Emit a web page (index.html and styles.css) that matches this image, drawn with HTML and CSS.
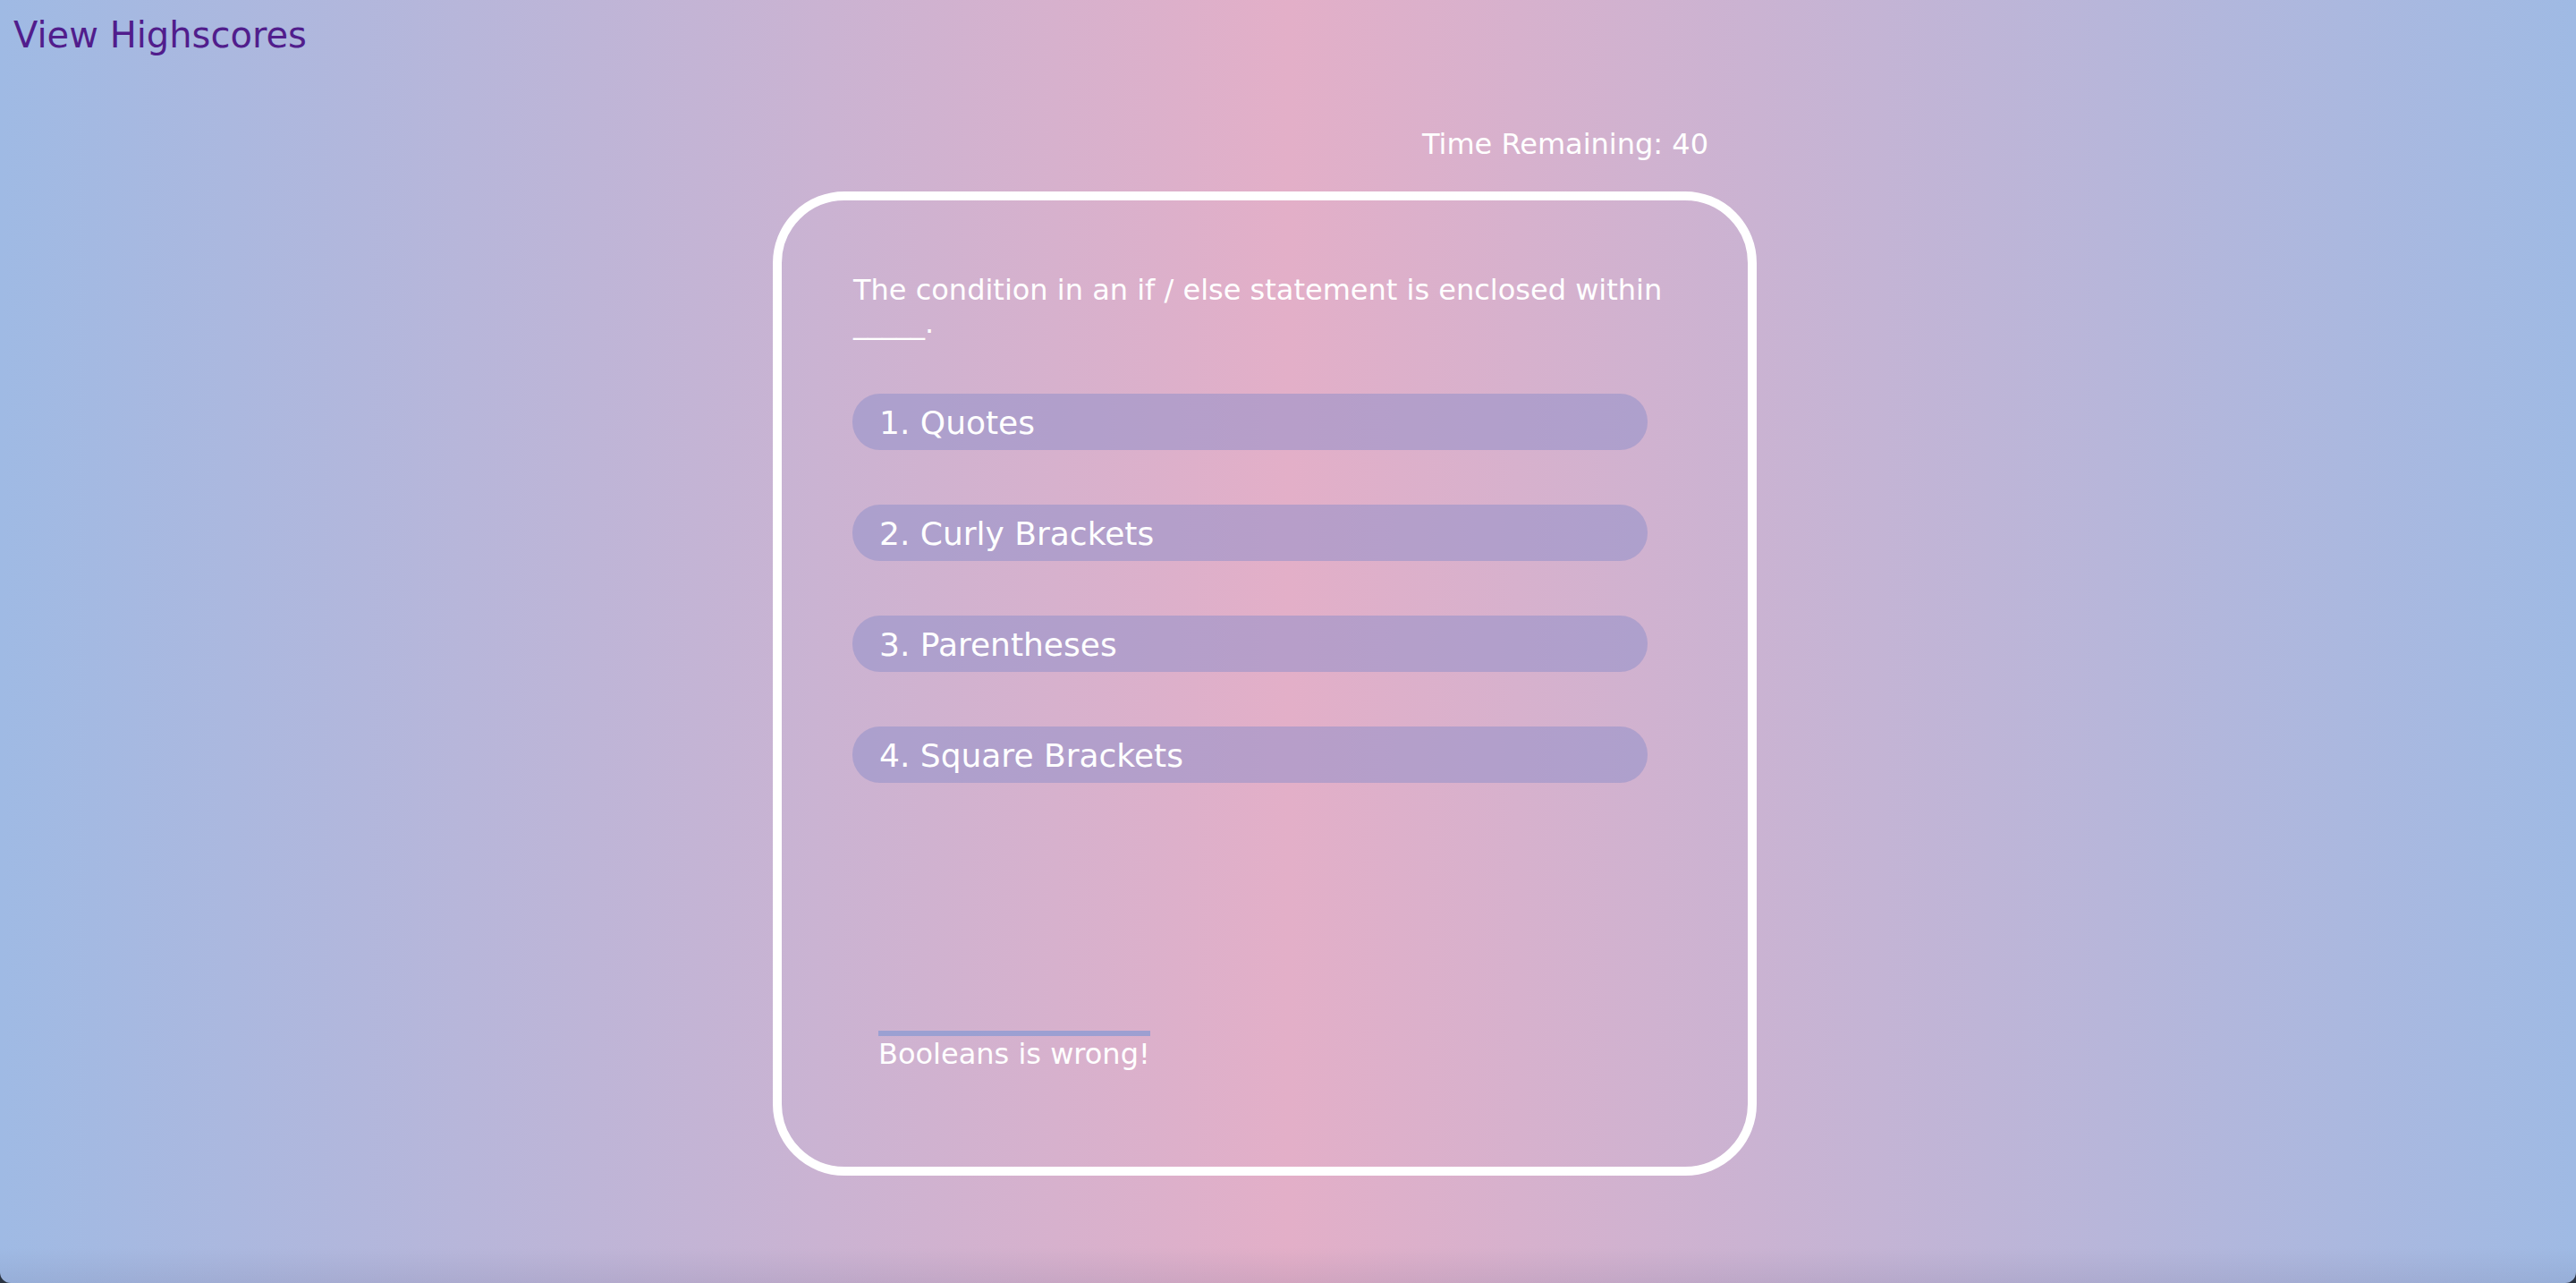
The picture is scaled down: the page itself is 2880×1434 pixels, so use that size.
FILE: index.html
```html
<!DOCTYPE html>
<html lang="en">
<head>
<meta charset="utf-8">
<title>Code Quiz</title>
<link rel="stylesheet" href="styles.css">
</head>
<body>
<div class="page">
  <header class="topbar">
    <a class="highscores" href="#">View Highscores</a>
  </header>
  <main class="stage">
    <div class="timer">Time Remaining: 40</div>
    <section class="card">
      <p class="question">The condition in an if / else statement is enclosed within _____.</p>
      <div class="answers">
        <button class="answer">1. Quotes</button>
        <button class="answer">2. Curly Brackets</button>
        <button class="answer">3. Parentheses</button>
        <button class="answer">4. Square Brackets</button>
      </div>
      <div class="feedback">
        <span class="feedback-text">Booleans is wrong!</span>
      </div>
    </section>
  </main>
</div>
</body>
</html>
```
FILE: styles.css
```css
* {
  box-sizing: border-box;
}

html {
  background: #2b3442;
}

body {
  margin: 0;
  font-family: "DejaVu Sans", Verdana, sans-serif;
}

.page {
  min-height: 1434px;
  border-radius: 0 0 12px 12px;
  overflow: hidden;
  background-image:
    linear-gradient(to top, rgba(90, 90, 130, 0.12), rgba(90, 90, 130, 0) 40px),
    linear-gradient(to right, #9fbae4 0%, #e3afc8 50%, #9fbae4 100%);
}

.topbar {
  padding: 16px 0 0 15px;
}

.highscores {
  display: inline-block;
  font-size: 40px;
  line-height: 47px;
  color: #511d8c;
  text-decoration: none;
}

.stage {
  margin-left: 30%;
  width: 1100px;
  padding-top: 80px;
}

.timer {
  font-size: 32px;
  line-height: 37px;
  color: #ffffff;
  text-align: right;
  padding-right: 54px;
}

.card {
  margin-top: 34px;
  height: 1100px;
  border: 10px solid #ffffff;
  border-radius: 80px;
  padding: 82px 80px 0 80px;
}

.question {
  margin: 0;
  font-size: 32px;
  line-height: 37px;
  color: #ffffff;
}

.answers {
  margin-top: 60px;
  display: flex;
  flex-direction: column;
  gap: 61px;
}

.answer {
  display: block;
  width: 889px;
  height: 63px;
  margin: 0 0 0 -1px;
  padding: 2px 30px 0;
  border: none;
  border-radius: 31px;
  background: rgba(140, 142, 202, 0.5);
  color: #ffffff;
  font-family: inherit;
  font-size: 36px;
  line-height: 61px;
  text-align: left;
}

.feedback {
  margin-top: 277px;
  padding-left: 28px;
}

.feedback-text {
  display: inline-block;
  border-top: 6px solid rgba(146, 156, 210, 0.85);
  padding-top: 2px;
  font-size: 32px;
  line-height: 37px;
  color: #ffffff;
}
```
